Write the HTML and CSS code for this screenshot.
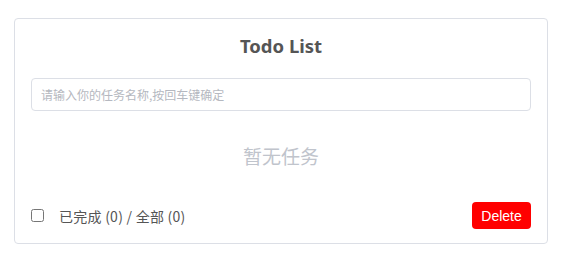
FILE: index.html
```html
<!DOCTYPE html>
<html lang="zh">
<head>
<meta charset="utf-8">
<title>Todo List</title>
<link rel="stylesheet" href="styles.css">
</head>
<body>
<div class="page">
  <div class="card">
    <h1 class="title">Todo List</h1>
    <input class="task-input" type="text" placeholder="请输入你的任务名称,按回车键确定">
    <div class="empty">暂无任务</div>
    <div class="footer">
      <label class="summary">
        <input class="check" type="checkbox">
        <span class="summary-text">已完成 (0) / 全部 (0)</span>
      </label>
      <button class="btn-delete">Delete</button>
    </div>
  </div>
</div>
</body>
</html>
```

FILE: styles.css
```css
html, body {
  margin: 0;
  padding: 0;
  background: #fff;
}
.page {
  padding: 18px 14px 0;
  font-family: "Noto Sans", "Noto Sans CJK SC", sans-serif;
  color: #555;
}
.card {
  border: 1px solid #dcdfe6;
  border-radius: 4px;
  padding: 15px 16px 14px;
  height: 226px;
  box-sizing: border-box;
  display: flex;
  flex-direction: column;
}
.title {
  margin: 0;
  font-size: 18.5px;
  line-height: 24px;
  font-weight: 700;
  text-align: center;
  color: #555;
}
.task-input {
  margin-top: 20px;
  height: 33px;
  box-sizing: border-box;
  border: 1px solid #dcdfe6;
  border-radius: 4px;
  padding: 0 9px;
  font-family: "Noto Sans CJK SC", sans-serif;
  font-size: 12px;
  outline: none;
}
.task-input::placeholder {
  color: #b5b8c0;
}
.empty {
  margin-top: 33px;
  text-align: center;
  font-family: "Noto Sans CJK SC", sans-serif;
  font-size: 19px;
  line-height: 24px;
  color: #c0c4cc;
}
.footer {
  margin-top: auto;
  display: flex;
  align-items: center;
  justify-content: space-between;
}
.summary {
  display: flex;
  align-items: center;
  font-family: "Noto Sans CJK SC", sans-serif;
  font-size: 14px;
  letter-spacing: 0.25px;
  color: #555;
}
.check {
  margin: 0 15px 0 0;
  width: 13px;
  height: 13px;
}
.btn-delete {
  width: 59px;
  height: 27px;
  border: none;
  border-radius: 4px;
  background: #ff0000;
  color: #fff;
  font-family: "Liberation Sans", Arial, sans-serif;
  font-size: 14px;
  padding: 0;
}
```
